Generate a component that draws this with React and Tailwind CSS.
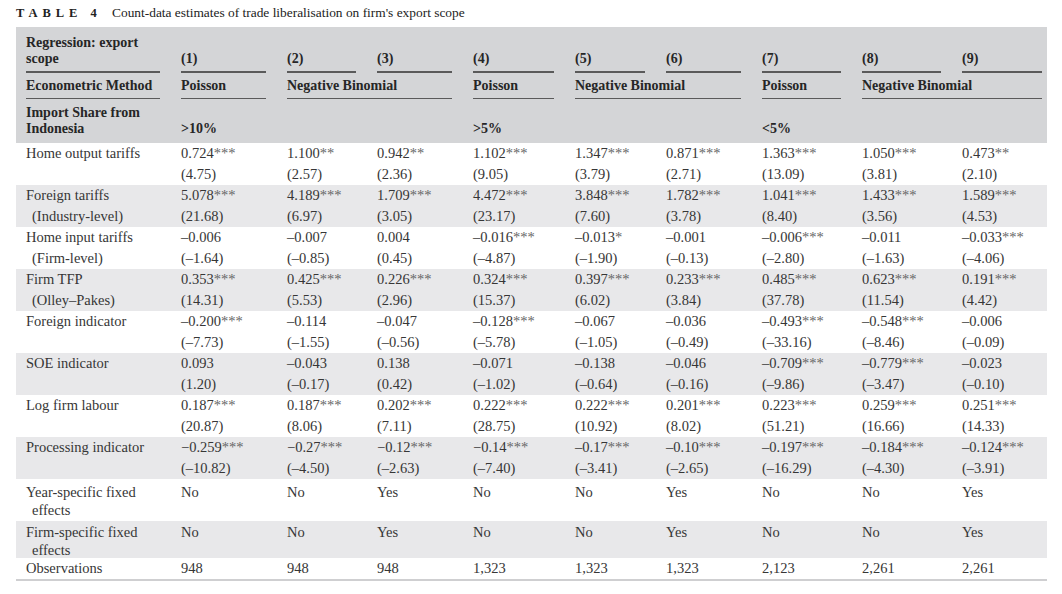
import React from "react";

const W = [
  "w-[165px]",
  "w-[106px]",
  "w-[90px]",
  "w-[96px]",
  "w-[102px]",
  "w-[91px]",
  "w-[96px]",
  "w-[100px]",
  "w-[100px]",
  "w-[85px]",
];

const rows = [
  {
    label: ["Home output tariffs"],
    c: ["0.724***", "1.100**", "0.942**", "1.102***", "1.347***", "0.871***", "1.363***", "1.050***", "0.473**"],
    t: ["(4.75)", "(2.57)", "(2.36)", "(9.05)", "(3.79)", "(2.71)", "(13.09)", "(3.81)", "(2.10)"],
  },
  {
    label: ["Foreign tariffs", "(Industry-level)"],
    c: ["5.078***", "4.189***", "1.709***", "4.472***", "3.848***", "1.782***", "1.041***", "1.433***", "1.589***"],
    t: ["(21.68)", "(6.97)", "(3.05)", "(23.17)", "(7.60)", "(3.78)", "(8.40)", "(3.56)", "(4.53)"],
  },
  {
    label: ["Home input tariffs", "(Firm-level)"],
    c: ["–0.006", "–0.007", "0.004", "–0.016***", "–0.013*", "–0.001", "–0.006***", "–0.011", "–0.033***"],
    t: ["(–1.64)", "(–0.85)", "(0.45)", "(–4.87)", "(–1.90)", "(–0.13)", "(–2.80)", "(–1.63)", "(–4.06)"],
  },
  {
    label: ["Firm TFP", "(Olley–Pakes)"],
    c: ["0.353***", "0.425***", "0.226***", "0.324***", "0.397***", "0.233***", "0.485***", "0.623***", "0.191***"],
    t: ["(14.31)", "(5.53)", "(2.96)", "(15.37)", "(6.02)", "(3.84)", "(37.78)", "(11.54)", "(4.42)"],
  },
  {
    label: ["Foreign indicator"],
    c: ["–0.200***", "–0.114", "–0.047", "–0.128***", "–0.067", "–0.036", "–0.493***", "–0.548***", "–0.006"],
    t: ["(–7.73)", "(–1.55)", "(–0.56)", "(–5.78)", "(–1.05)", "(–0.49)", "(–33.16)", "(–8.46)", "(–0.09)"],
  },
  {
    label: ["SOE indicator"],
    c: ["0.093", "–0.043", "0.138", "–0.071", "–0.138", "–0.046", "–0.709***", "–0.779***", "–0.023"],
    t: ["(1.20)", "(–0.17)", "(0.42)", "(–1.02)", "(–0.64)", "(–0.16)", "(–9.86)", "(–3.47)", "(–0.10)"],
  },
  {
    label: ["Log firm labour"],
    c: ["0.187***", "0.187***", "0.202***", "0.222***", "0.222***", "0.201***", "0.223***", "0.259***", "0.251***"],
    t: ["(20.87)", "(8.06)", "(7.11)", "(28.75)", "(10.92)", "(8.02)", "(51.21)", "(16.66)", "(14.33)"],
  },
  {
    label: ["Processing indicator"],
    c: ["−0.259***", "−0.27***", "−0.12***", "−0.14***", "–0.17***", "–0.10***", "–0.197***", "–0.184***", "–0.124***"],
    t: ["(–10.82)", "(–4.50)", "(–2.63)", "(–7.40)", "(–3.41)", "(–2.65)", "(–16.29)", "(–4.30)", "(–3.91)"],
  },
];

const fe = ["No", "No", "Yes", "No", "No", "Yes", "No", "No", "Yes"];
const obs = ["948", "948", "948", "1,323", "1,323", "1,323", "2,123", "2,261", "2,261"];

function Val({ s }) {
  const m = s.match(/^(.*?)(\**)$/);
  return (
    <span>
      {m[1]}
      {m[2] && <span className="text-[#666]">{m[2]}</span>}
    </span>
  );
}

function Line({ className = "" }) {
  return <div className={"h-[1.5px] bg-[#5a5a5a] " + className} />;
}

export default function App() {
  return (
    <div
      className="w-[1062px] h-[594px] bg-white text-[#363636] overflow-hidden"
      style={{ fontFamily: '"Liberation Serif", "Times New Roman", serif' }}
    >
      {/* Title */}
      <div className="h-[27px] flex items-center pl-[16px] text-[13.4px] text-[#222]">
        <span className="font-bold tracking-[5px] text-[12.5px] w-[96px]">TABLE 4</span>
        <span>Count-data estimates of trade liberalisation on firm's export scope</span>
      </div>

      <div className="ml-[16px] w-[1031px] text-[14.5px]">
        {/* Header */}
        <div className="bg-[#d4d5d7] pt-[8px] pb-[6px] font-bold text-[#262626] leading-[16px] text-[14px]">
          {/* Row A */}
          <div className="flex items-end">
            <div className={W[0] + " pl-[10px]"}>
              <div>Regression: export</div>
              <div>scope</div>
            </div>
            {["(1)", "(2)", "(3)", "(4)", "(5)", "(6)", "(7)", "(8)", "(9)"].map((h, i) => (
              <div key={i} className={W[i + 1]}>
                {h}
              </div>
            ))}
          </div>
          <div className="flex mt-[4px]">
            <div className={W[0] + " pl-[10px] pr-[21px]"}>
              <Line />
            </div>
            {[0, 1, 2, 3, 4, 5, 6, 7, 8].map((i) => (
              <div key={i} className={W[i + 1] + (i === 8 ? " pr-[5px]" : " pr-[21px]")}>
                <Line />
              </div>
            ))}
          </div>
          {/* Row B */}
          <div className="flex mt-[5px]">
            <div className={W[0] + " pl-[10px]"}>Econometric Method</div>
            <div className={W[1]}>Poisson</div>
            <div className="w-[186px]">Negative Binomial</div>
            <div className={W[4]}>Poisson</div>
            <div className="w-[187px]">Negative Binomial</div>
            <div className={W[7]}>Poisson</div>
            <div className="w-[185px]">Negative Binomial</div>
          </div>
          <div className="flex mt-[4px]">
            <div className={W[0] + " pl-[10px] pr-[21px]"}>
              <Line />
            </div>
            <div className={W[1] + " pr-[21px]"}>
              <Line />
            </div>
            <div className="w-[186px] pr-[21px]">
              <Line />
            </div>
            <div className={W[4] + " pr-[21px]"}>
              <Line />
            </div>
            <div className="w-[187px] pr-[21px]">
              <Line />
            </div>
            <div className={W[7] + " pr-[21px]"}>
              <Line />
            </div>
            <div className="w-[185px] pr-[5px]">
              <Line />
            </div>
          </div>
          {/* Row C */}
          <div className="flex items-end mt-[6px]">
            <div className={W[0] + " pl-[10px]"}>
              <div>Import Share from</div>
              <div>Indonesia</div>
            </div>
            <div className={W[1]}>&gt;10%</div>
            <div className={W[2]} />
            <div className={W[3]} />
            <div className={W[4]}>&gt;5%</div>
            <div className={W[5]} />
            <div className={W[6]} />
            <div className={W[7]}>&lt;5%</div>
          </div>
        </div>

        {/* Body */}
        {rows.map((r, ri) => (
          <div
            key={ri}
            className={"flex h-[42px] leading-[21px] " + (ri % 2 === 1 ? "bg-[#e8e8ea]" : "bg-white")}
          >
            <div className={W[0] + " pl-[10px]"}>
              <div>{r.label[0]}</div>
              {r.label[1] && <div className="pl-[6px]">{r.label[1]}</div>}
            </div>
            {r.c.map((v, i) => (
              <div key={i} className={W[i + 1]}>
                <div>
                  <Val s={v} />
                </div>
                <div>{r.t[i]}</div>
              </div>
            ))}
          </div>
        ))}

        {/* Year FE */}
        <div className="flex h-[42px] leading-[18px] pt-[4px] bg-white">
          <div className={W[0] + " pl-[10px]"}>
            <div>Year-specific fixed</div>
            <div className="pl-[6px]">effects</div>
          </div>
          {fe.map((v, i) => (
            <div key={i} className={W[i + 1]}>
              {v}
            </div>
          ))}
        </div>
        {/* Firm FE */}
        <div className="flex h-[37px] leading-[18px] pt-[2px] bg-[#e8e8ea]">
          <div className={W[0] + " pl-[10px]"}>
            <div>Firm-specific fixed</div>
            <div className="pl-[6px]">effects</div>
          </div>
          {fe.map((v, i) => (
            <div key={i} className={W[i + 1]}>
              {v}
            </div>
          ))}
        </div>
        {/* Observations */}
        <div className="flex h-[23px] leading-[21px] bg-white border-b-2 border-[#cfcfd1]">
          <div className={W[0] + " pl-[10px]"}>Observations</div>
          {obs.map((v, i) => (
            <div key={i} className={W[i + 1]}>
              {v}
            </div>
          ))}
        </div>
      </div>
    </div>
  );
}
